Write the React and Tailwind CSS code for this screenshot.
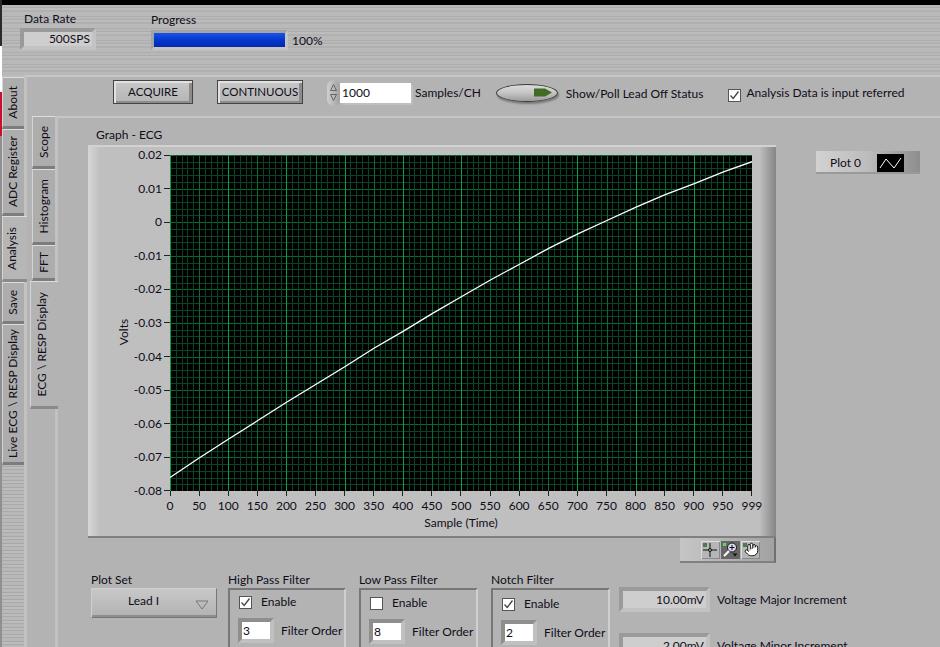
import { Hand } from "lucide-react"

const yLabels = ["0.02", "0.01", "0", "-0.01", "-0.02", "-0.03", "-0.04", "-0.05", "-0.06", "-0.07", "-0.08"]
const xLabels = ["0", "50", "100", "150", "200", "250", "300", "350", "400", "450", "500", "550", "600", "650", "700", "750", "800", "850", "900", "950", "999"]

// sample, volts read off the curve
const curve = [
  [0, -0.076], [50, -0.0702], [100, -0.0646], [150, -0.0591], [200, -0.0536], [250, -0.0483], [300, -0.043],
  [350, -0.0375], [400, -0.0325], [450, -0.0272], [500, -0.0222], [550, -0.0172], [600, -0.0125], [650, -0.0078],
  [700, -0.0035], [750, 0.0005], [800, 0.0045], [850, 0.0082], [900, 0.0115], [950, 0.015], [999, 0.018],
]

function Plot() {
  const w = 582
  const h = 336
  const vLines = Array.from({ length: 101 }, (_, i) => i)
  const hLines = Array.from({ length: 51 }, (_, i) => i)
  const points = curve.map(([s, v]) => `${(s / 999) * w},${((0.02 - v) / 0.1) * h}`).join(" ")

  return (
    <svg width={w} height={h} viewBox={`0 0 ${w} ${h}`} className="block bg-black">
      <g shapeRendering="crispEdges">
        {hLines.map((i) => {
          const y = Math.round(i * 6.72) + 0.5
          return <line key={i} x1="0" x2={w} y1={y} y2={y} stroke={i % 5 === 0 ? "#0a6a32" : "#0a4426"} />
        })}
        {vLines.map((i) => {
          const x = Math.round(i * 5.82) + 0.5
          return <line key={i} y1="0" y2={h} x1={x} x2={x} stroke={i % 10 === 0 ? "#08a044" : i % 5 === 0 ? "#0a6e34" : "#0a4426"} />
        })}
      </g>
      <polyline points={points} fill="none" stroke="#ffffff" strokeWidth="1.3" />
    </svg>
  )
}

function SideTab({ label, selected, className = "" }) {
  return (
    <div
      className={`flex items-center justify-center border-b-[3px] ${selected ? "bg-[#b6b6b6] border-[#8a8a8a]" : "bg-[#adadad] border-[#7d7d7d]"} border-t border-t-[#dddddd] border-l border-l-[#d4d4d4] ${className}`}
    >
      <span className="[writing-mode:vertical-rl] rotate-180 whitespace-nowrap leading-none">{label}</span>
    </div>
  )
}

function Check({ checked }) {
  return (
    <span className="flex h-[13px] w-[13px] shrink-0 items-center justify-center border border-[#555555] bg-white">
      {checked && (
        <svg width="11" height="11" viewBox="0 0 11 11">
          <path d="M1.5 5.5 L4.2 8.5 L9.5 1.5" fill="none" stroke="#444444" strokeWidth="1.3" />
        </svg>
      )}
    </span>
  )
}

function ReadOut({ value, className = "" }) {
  return (
    <div className={`flex items-center justify-end border-[4px] border-t-[#9a9a9a] border-l-[#9a9a9a] border-r-[#c2c2c2] border-b-[#c2c2c2] bg-[#cecece] pr-[2px] ${className}`}>
      {value}
    </div>
  )
}

function OrderInput({ value }) {
  return (
    <div className="flex h-[25px] w-[36px] shrink-0 items-center border-[4px] border-t-[#8e8e8e] border-l-[#8e8e8e] border-r-[#c0c0c0] border-b-[#c0c0c0] bg-white pl-[1px]">
      {value}
    </div>
  )
}

function FilterBox({ title, checked, order, width, enableGap = "mt-[6px]" }) {
  return (
    <div className="shrink-0" style={{ width }}>
      <div className="h-[16px] leading-[16px]">{title}</div>
      <div className="h-[80px] border-2 border-t-[#777777] border-l-[#777777] border-r-[#d0d0d0] border-b-[#d0d0d0] px-[9px]">
        <div className={`flex items-center gap-[9px] ${enableGap}`}>
          <Check checked={checked} />
          <span>Enable</span>
        </div>
        <div className="mt-[9px] -ml-[1px] flex items-center gap-[7px]">
          <OrderInput value={order} />
          <span className="whitespace-nowrap">Filter Order</span>
        </div>
      </div>
    </div>
  )
}

function LatchButton({ label, className = "" }) {
  return (
    <button className={`-mt-[2px] h-[24px] border border-[#444444] bg-gradient-to-b from-[#c8c8c8] to-[#b4b4b4] text-center text-[11.5px] shadow-[inset_2px_2px_0_#e2e2e2,inset_-3px_-2px_0_#8c8c8c] ${className}`}>
      {label}
    </button>
  )
}

export default function App() {
  return (
    <div className="flex h-[647px] w-[940px] overflow-hidden bg-[#b3b3b3] font-['Lato',sans-serif] text-[12px] leading-[14px] text-[#100c18]">
      {/* left edge of the window */}
      <div className="flex w-[2px] shrink-0 flex-col">
        <div className="h-[46px] bg-[#2a2a2a]" />
        <div className="h-[46px] bg-white" />
        <div className="h-[44px] bg-[#c8102e]" />
        <div className="flex-1 bg-[#8f8f8f]" />
      </div>

      <div className="flex min-w-0 flex-1 flex-col">
        <div className="h-[5px] shrink-0 bg-black" />

        {/* Header */}
        <header className="flex h-[70px] shrink-0 items-start bg-[repeating-linear-gradient(180deg,#b8b8b8_0px,#b8b8b8_2px,#acacac_2px,#acacac_3px,#bcbcbc_3px,#bcbcbc_5px,#b0b0b0_5px,#b0b0b0_7px,#b9b9b9_7px,#b9b9b9_11px,#aeaeae_11px,#aeaeae_12px)]">
          <div className="ml-[18px] mt-[7px] w-[76px]">
            <div className="ml-[4px] h-[16px] whitespace-nowrap">Data Rate</div>
            <ReadOut value="500SPS" className="h-[22px]" />
          </div>
          <div className="ml-[55px] mt-[8px] w-[137px]">
            <div className="h-[17px] whitespace-nowrap">Progress</div>
            <div className="border-[3px] border-[#a4a4a4] border-r-[#c4c4c4] border-b-[#c4c4c4]">
              <div className="h-[14px] bg-gradient-to-b from-[#1f50e4] via-[#0038d0] to-[#0628a8]" />
            </div>
          </div>
          <div className="ml-[4px] mt-[29px]">100%</div>
        </header>

        <div className="flex min-h-0 flex-1">
          {/* Main tabs */}
          <div className="flex w-[22px] shrink-0 flex-col bg-[repeating-linear-gradient(180deg,#bcbcbc_0px,#bcbcbc_2px,#aaaaaa_2px,#aaaaaa_3px,#b8b8b8_3px,#b8b8b8_6px,#a8a8a8_6px,#a8a8a8_7px)]">
            <div className="h-[2px]" />
            <SideTab label="About" className="h-[52px] pr-[2px]" />
            <SideTab label="ADC Register" className="h-[87px] pr-[2px]" />
            <SideTab label="Analysis" selected className="relative z-10 h-[66px] w-[25px] pr-[7px]" />
            <SideTab label="Save" className="h-[42px] pr-[2px]" />
            <SideTab label="Live ECG \ RESP Display" className="h-[141px] pr-[2px]" />
          </div>

          {/* Analysis panel */}
          <div className="flex min-w-0 flex-1 flex-col border-t-2 border-l-[3px] border-t-[#c6c6c6] border-l-[#c2c2c2]">
            <div className="flex h-[39px] shrink-0 items-center pb-[8px] pl-[86px]">
              <LatchButton label="ACQUIRE" className="w-[80px]" />
              <LatchButton label="CONTINUOUS" className="ml-[24px] w-[86px]" />
              <div className="ml-[24px] flex h-[26px] w-[13px] flex-col items-center justify-center gap-[1px] rounded-full bg-gradient-to-r from-[#d0d0d0] to-[#a0a0a0]">
                <svg width="9" height="9" viewBox="0 0 9 9"><path d="M4.5 1.5 L7.5 7.5 H1.5 Z" fill="none" stroke="#666666" /></svg>
                <svg width="9" height="9" viewBox="0 0 9 9"><path d="M1.5 1.5 H7.5 L4.5 7.5 Z" fill="none" stroke="#666666" /></svg>
              </div>
              <div className="flex h-[20px] w-[71px] items-center bg-white pl-[2px] shadow-[2px_2px_0_#bfbfbf]">1000</div>
              <span className="ml-[4px] whitespace-nowrap">Samples/CH</span>
              <div className="ml-[15px] flex h-[18px] w-[62px] items-center justify-end rounded-[50%] border border-[#3c3c3c] bg-gradient-to-b from-[#dcdcdc] via-[#c4c4c4] to-[#9c9c9c] pr-[4px] shadow-[1px_2px_2px_#777777]">
                <svg width="20" height="11" viewBox="0 0 20 11">
                  <path d="M1 1.5 H12 L19 5.5 L12 9.5 H1 Z" fill="#3f6b22" />
                </svg>
              </div>
              <span className="ml-[8px] mt-[3px] whitespace-nowrap">Show/Poll Lead Off Status</span>
              <div className="ml-[25px] mt-[5px]"><Check checked /></div>
              <span className="ml-[5px] whitespace-nowrap">Analysis Data is input referred</span>
            </div>

            <div className="flex min-h-0 flex-1">
              {/* ECG tabs */}
              <div className="flex w-[28px] shrink-0 flex-col items-end">
                <SideTab label="Scope" className="h-[53px] w-[23px]" />
                <SideTab label="Histogram" className="h-[76px] w-[23px]" />
                <SideTab label="FFT" className="h-[36px] w-[23px]" />
                <SideTab label="ECG \ RESP Display" selected className="relative z-10 -mr-[3px] h-[128px] w-[28px] pr-[5px] !bg-[#b3b3b3]" />
              </div>

              {/* Graph page */}
              <div className="min-w-0 flex-1 border-t-2 border-l-[3px] border-t-[#c6c6c6] border-l-[#c2c2c2] pl-[30px]">
                <div className="flex items-start">
                  <div className="w-[688px] shrink-0">
                    <div className="ml-[8px] mt-[8px] h-[19px] leading-[17px]">Graph - ECG</div>
                    <div className="flex h-[393px] border-b-2 border-b-[#808080] border-t-2 border-t-[#d2d2d2] bg-[#bfbfbf]">
                      <div className="w-[11px] shrink-0 bg-gradient-to-r from-[#d6d6d6] to-[#c2c2c2]" />

                      {/* Volts */}
                      <div className="relative w-[71px] shrink-0">
                        <span className="absolute left-[25px] top-[178px] -translate-x-1/2 rotate-[-90deg] whitespace-nowrap">Volts</span>
                        <div className="mt-[8px] flex h-[336px] flex-col items-end justify-between">
                          {yLabels.map((label) => (
                            <div key={label} className="flex h-0 items-center gap-[2px]">
                              <span>{label}</span>
                              <span className="h-px w-[6px] bg-[#222222]" />
                            </div>
                          ))}
                        </div>
                      </div>

                      <div className="relative z-10 w-[582px] shrink-0 pt-[8px]">
                        <Plot />
                        <div className="flex justify-between">
                          {xLabels.map((label) => (
                            <div key={label} className="flex w-0 flex-col items-center">
                              <span className="h-[5px] w-px shrink-0 bg-[#222222]" />
                              <span className="mt-[3px]">{label}</span>
                            </div>
                          ))}
                        </div>
                        <div className="mt-[3px] text-center">Sample (Time)</div>
                      </div>

                      <div className="ml-[8px] flex-1 bg-gradient-to-r from-[#bdbdbd] to-[#868686]" />
                    </div>

                    {/* Graph palette */}
                    <div className="flex justify-end">
                      <div className="flex h-[25px] w-[96px] items-center justify-center gap-[1px] border-b-2 border-r-2 border-b-[#808080] border-r-[#707070] bg-gradient-to-r from-[#c6c6c6] to-[#a2a2a2] pl-[6px]">
                        <div className="relative flex h-[18px] w-[19px] items-center justify-center bg-[#b6b6b6] shadow-[inset_1px_1px_0_#dddddd,inset_-1px_-1px_0_#888888]">
                          <span className="absolute left-[2px] top-[2px] h-[4px] w-[4px] bg-[#4f7a4f]" />
                          <svg width="16" height="16" viewBox="0 0 16 16">
                            <path d="M8 1 V15 M1 8 H15" stroke="#111111" />
                            <circle cx="8" cy="8" r="1.5" fill="#b6b6b6" stroke="#111111" />
                          </svg>
                        </div>
                        <div className="relative flex h-[18px] w-[19px] items-center justify-center bg-[#666666]">
                          <span className="absolute left-[2px] top-[2px] h-[3px] w-[3px] bg-[#55e055]" />
                          <svg width="17" height="17" viewBox="0 0 17 17">
                            <circle cx="10" cy="6.5" r="4.5" fill="#d8d8ee" stroke="#111111" />
                            <path d="M7.5 6.5 H12.5 M10 4 V9" stroke="#111111" />
                            <path d="M7 10 L2 15" stroke="#ffffff" strokeWidth="2" />
                            <path d="M10.5 12.5 H15.5 L13 15.5 Z" fill="#111111" />
                          </svg>
                        </div>
                        <div className="relative flex h-[18px] w-[19px] items-center justify-center bg-[#b6b6b6] shadow-[inset_1px_1px_0_#dddddd,inset_-1px_-1px_0_#888888]">
                          <span className="absolute left-[2px] top-[2px] h-[4px] w-[4px] bg-[#4f7a4f]" />
                          <Hand size={15} strokeWidth={1.6} className="ml-[3px] text-[#111111]" fill="#ffffff" />
                        </div>
                      </div>
                    </div>
                  </div>

                  {/* Legend */}
                  <div className="ml-[40px] mt-[33px] flex h-[23px] w-[104px] shrink-0 items-center bg-gradient-to-r from-[#d2d2d2] via-[#bcbcbc] to-[#8e8e8e] pl-[14px] shadow-[inset_0_-2px_0_#9a9a9a]">
                    <span className="whitespace-nowrap">Plot 0</span>
                    <span className="ml-[16px] flex h-[18px] w-[27px] items-center justify-center bg-black">
                      <svg width="23" height="14" viewBox="0 0 23 14">
                        <path d="M1 12 L7 3 L15 12 L22 2" fill="none" stroke="#ffffff" />
                      </svg>
                    </span>
                  </div>
                </div>

                {/* Plot set and filters */}
                <div className="ml-[3px] mt-[9px] flex items-start">
                  <div className="w-[126px] shrink-0">
                    <div className="h-[16px] leading-[16px]">Plot Set</div>
                    <div className="flex h-[30px] items-center justify-between border border-[#777777] border-t-[#d0d0d0] border-l-[#d0d0d0] bg-gradient-to-b from-[#c8c8c8] to-[#b2b2b2] pl-[36px] pr-[7px] shadow-[inset_0_-2px_0_#8e8e8e]">
                      <span className="-mt-[5px]">Lead I</span>
                      <svg width="14" height="10" viewBox="0 0 14 10" className="mt-[3px]">
                        <path d="M1 1 H13 L7 9 Z" fill="none" stroke="#777777" />
                      </svg>
                    </div>
                  </div>
                  <div className="ml-[11px] flex gap-[13px]">
                    <FilterBox title="High Pass Filter" checked order="3" width={118} enableGap="mt-[5px]" />
                    <FilterBox title="Low Pass Filter" order="8" width={119} />
                    <FilterBox title="Notch Filter" checked order="2" width={119} enableGap="mt-[7px]" />
                  </div>
                  <div className="ml-[9px] pt-[15px]">
                    <div className="flex items-center">
                      <ReadOut value="10.00mV" className="h-[25px] w-[91px]" />
                      <span className="ml-[7px] whitespace-nowrap">Voltage Major Increment</span>
                    </div>
                    <div className="mt-[21px] flex items-center">
                      <ReadOut value="2.00mV" className="h-[25px] w-[91px]" />
                      <span className="ml-[7px] whitespace-nowrap">Voltage Minor Increment</span>
                    </div>
                  </div>
                </div>
              </div>
            </div>
          </div>
        </div>
      </div>
    </div>
  )
}
